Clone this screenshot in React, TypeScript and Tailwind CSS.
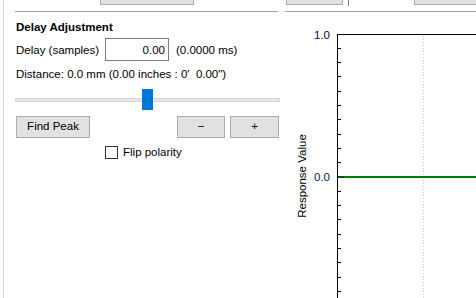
import React from "react";

const ticks = Array.from({ length: 19 }, (_, k) => 34 + 14.3 * k);

function Chart() {
  // chart drawn in page coords shifted by the panel origin (285, 12)
  const ox = 285;
  const oy = 12;
  return (
    <svg width="191" height="286" className="block" style={{ fontFamily: '"Liberation Sans", Arial, sans-serif' }}>
      <line x1={138.5} y1={36 - oy} x2={138.5} y2={286} stroke="#c4c4c4" strokeDasharray="1 2" />
      <line x1={337.5 - ox} y1={34 - oy} x2={337.5 - ox} y2={286} stroke="#000" />
      <line x1={337 - ox} y1={34.5 - oy} x2={191} y2={34.5 - oy} stroke="#000" />
      {ticks.slice(1).map((t) => (
        <line key={t} x1={337 - ox} x2={341 - ox} y1={Math.floor(t) + 0.5 - oy} y2={Math.floor(t) + 0.5 - oy} stroke="#000" />
      ))}
      <line x1={338 - ox} x2={191} y1={177 - oy} y2={177 - oy} stroke="#008000" strokeWidth="2" />
      <line x1={337 - ox} x2={344 - ox} y1={177 - oy} y2={177 - oy} stroke="#1a1a1a" strokeWidth="1" />
      <text x={330 - ox} y={39 - oy} textAnchor="end" fontSize="11.5" fill="#0a0a3c">1.0</text>
      <text x={330 - ox} y={181 - oy} textAnchor="end" fontSize="11.5" fill="#0a1a5a">0.0</text>
      <text
        x={0}
        y={0}
        fontSize="11.5"
        fill="#000"
        textAnchor="middle"
        transform={`translate(${306 - ox} ${176 - oy}) rotate(-90)`}
      >
        Response Value
      </text>
    </svg>
  );
}

export default function App() {
  return (
    <div
      className="w-[476px] h-[298px] bg-white flex overflow-hidden text-[11.5px] text-black"
      style={{ fontFamily: '"Liberation Sans", Arial, sans-serif' }}
    >
      {/* left panel */}
      <div className="ml-[3px] w-[282px] border-l border-[#dadada] flex flex-col">
        <div className="h-[11px]">
          <div className="ml-[96px] w-[94px] h-[5px] bg-[#e1e1e1] border border-t-0 border-[#adadad]" />
        </div>
        <div className="ml-[11px] mr-[7px] h-px bg-[#a0a0a0]" />
        <div className="ml-[12px] mt-[7px] leading-[16px] font-bold">Delay Adjustment</div>
        <div className="ml-[12px] mt-[3px] flex items-center h-[23px]">
          <span className="w-[89px] leading-[16px]">Delay (samples)</span>
          <div className="w-[64px] h-[23px] border border-[#7a7a7a] flex items-center justify-end pr-[3px] leading-[16px]">
            0.00
          </div>
          <span className="ml-[7px] leading-[16px]">(0.0000 ms)</span>
        </div>
        <div className="ml-[12px] mt-[5px] leading-[16px] whitespace-pre">Distance: 0.0 mm (0.00 inches : 0'  0.00")</div>
        <div className="relative ml-[11px] mr-[5px] mt-[7px] h-[21px]">
          <div className="absolute left-0 right-0 top-[9px] h-[4px] bg-[#e7e7e7] border border-[#d6d6d6]" />
          <div className="absolute left-[127px] top-0 w-[11px] h-[21px] bg-[#0078d7]" />
        </div>
        <div className="ml-[12px] mt-[6px] flex h-[22px]">
          <div className="w-[74px] bg-[#e1e1e1] border border-[#adadad] flex items-center justify-center">Find Peak</div>
          <div className="ml-[87px] w-[48px] bg-[#e1e1e1] border border-[#adadad] flex items-center justify-center">−</div>
          <div className="ml-[5px] w-[49px] bg-[#e1e1e1] border border-[#adadad] flex items-center justify-center">+</div>
        </div>
        <div className="ml-[101px] mt-[7px] flex items-center h-[14px]">
          <div className="w-[13px] h-[13px] border border-[#333] bg-white" />
          <span className="ml-[5px] leading-[16px]">Flip polarity</span>
        </div>
      </div>

      {/* right panel */}
      <div className="flex-1 flex flex-col">
        <div className="h-[11px] flex items-start">
          <div className="ml-[1px] w-[57px] h-[5px] bg-[#e1e1e1] border border-t-0 border-[#adadad]" />
          <div className="ml-[5px] w-px h-[6px] bg-[#808080]" />
          <div className="ml-[65px] flex-1 h-[5px] bg-[#e1e1e1] border border-t-0 border-r-0 border-[#adadad]" />
        </div>
        <div className="h-px bg-[#a0a0a0]" />
        <Chart />
      </div>
    </div>
  );
}
